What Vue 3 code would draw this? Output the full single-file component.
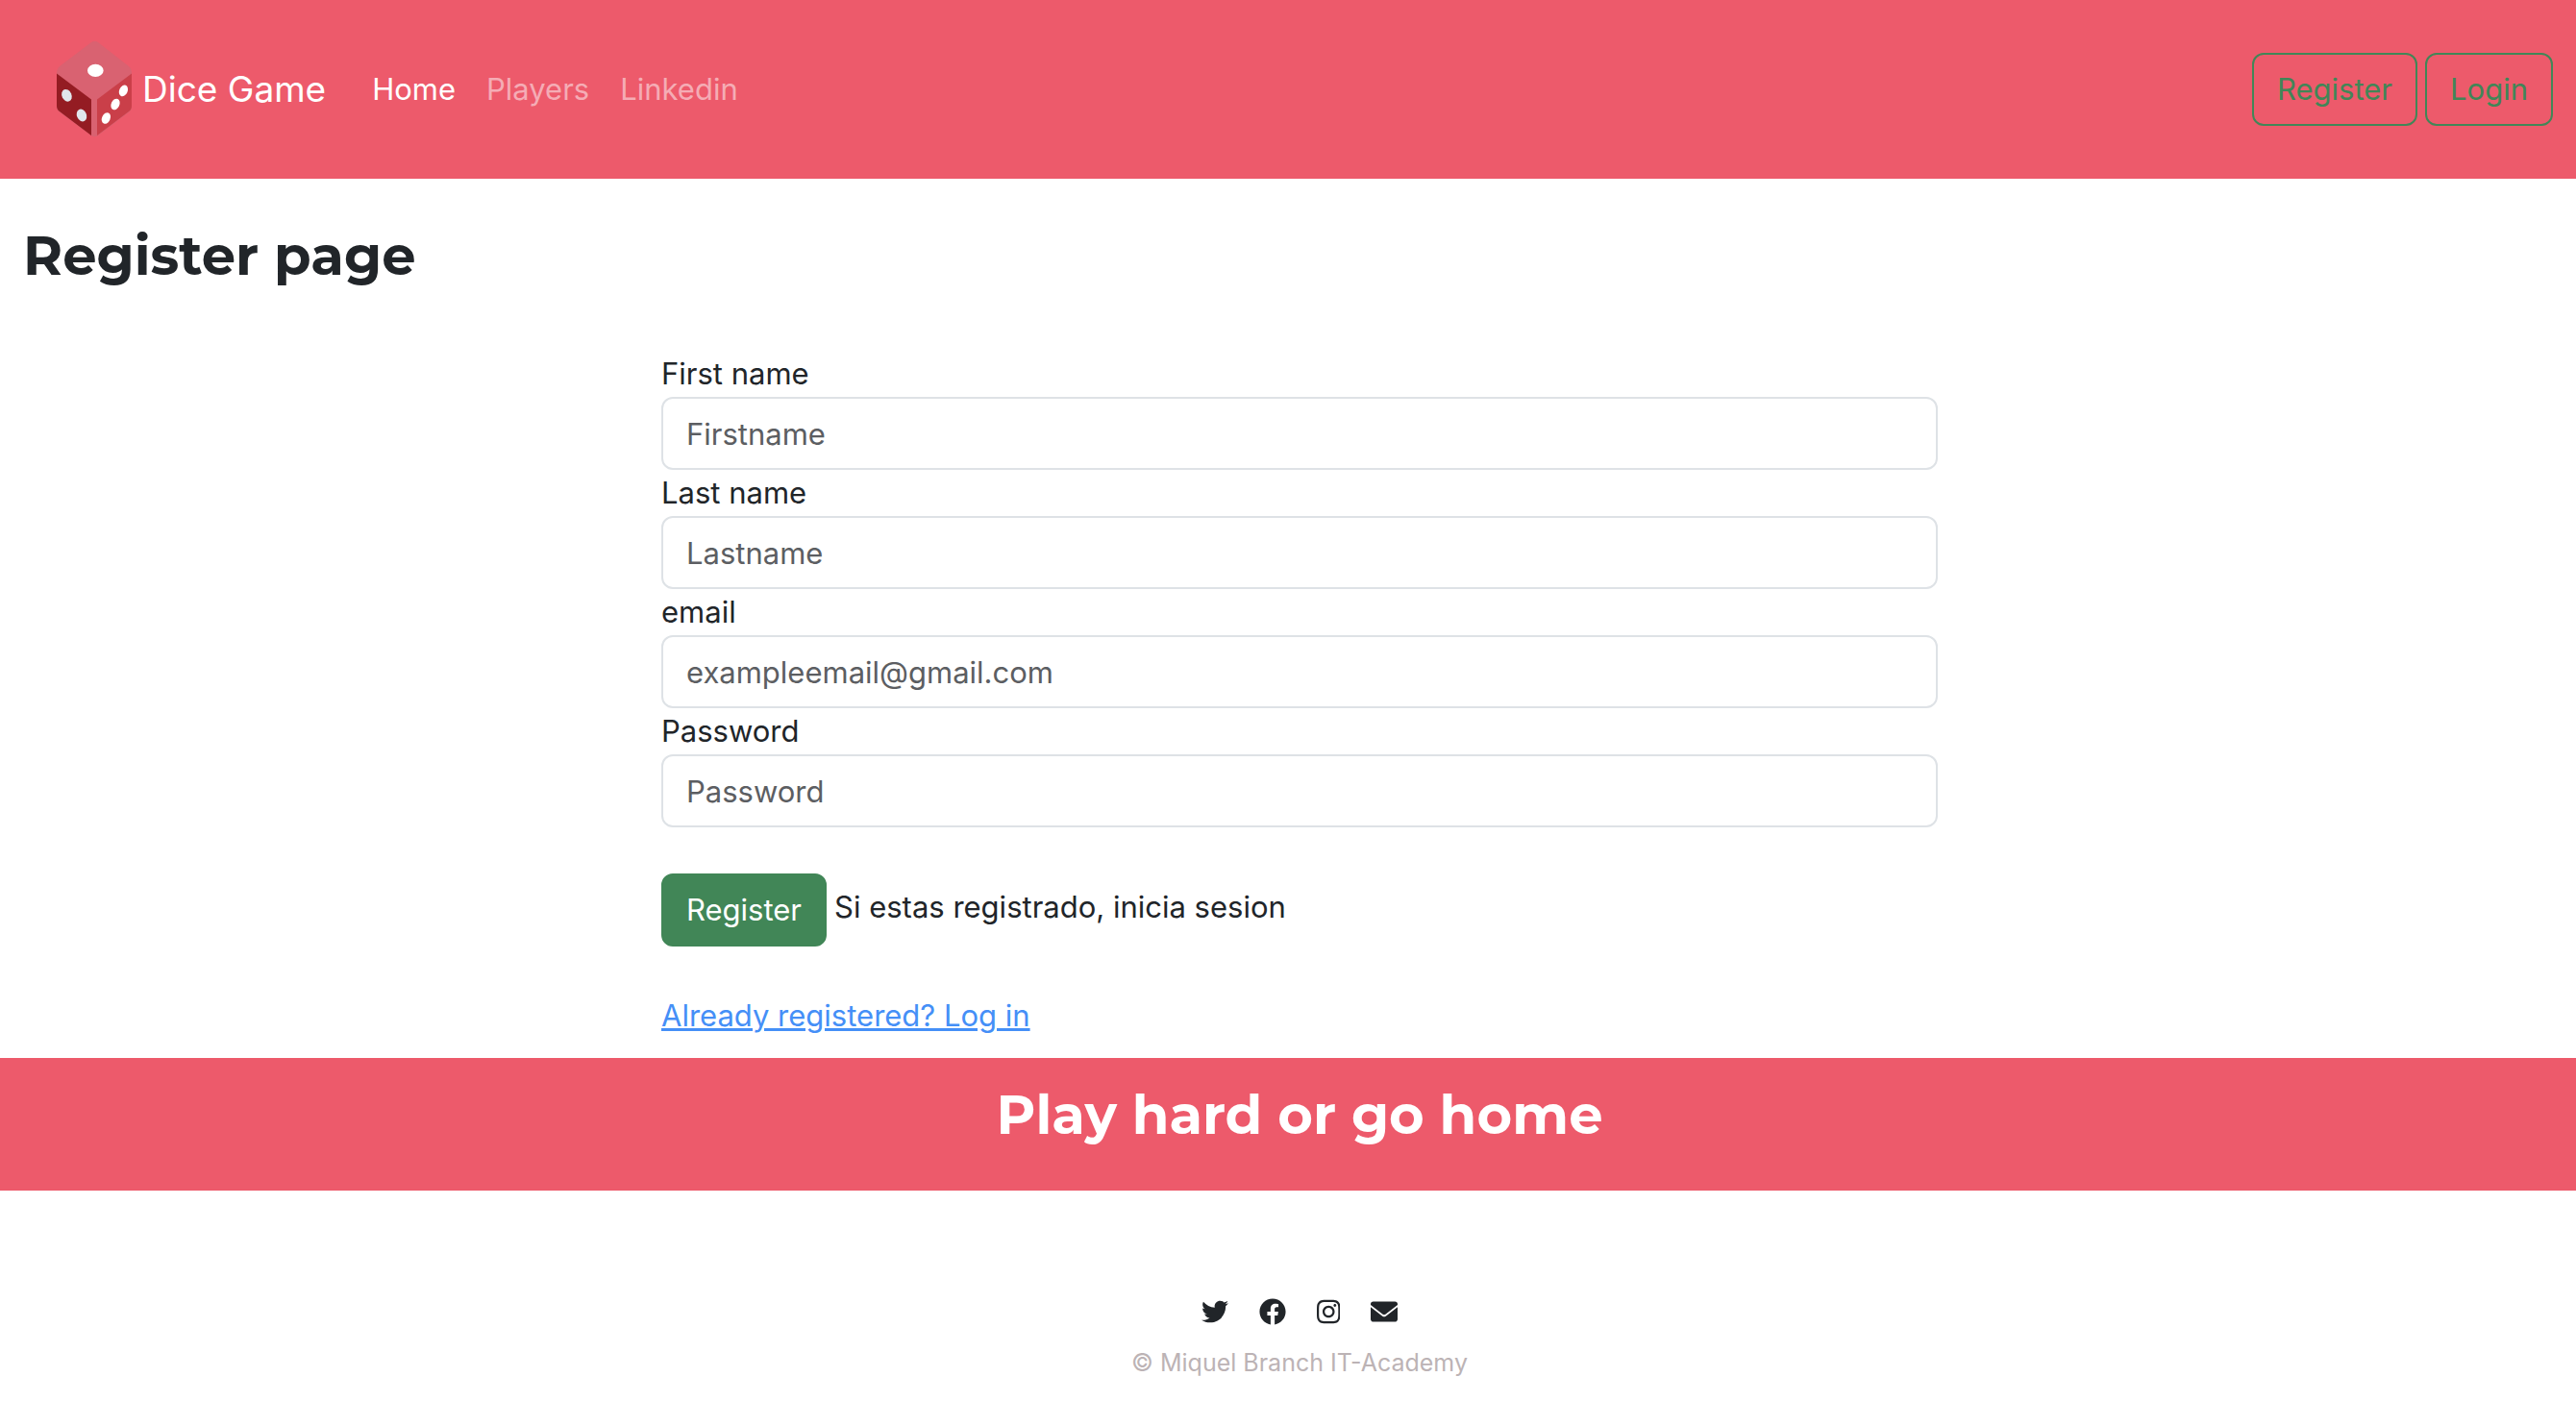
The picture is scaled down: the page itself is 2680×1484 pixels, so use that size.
<script setup>
import { reactive } from 'vue'

const links = [
  { label: 'Home', active: true },
  { label: 'Players', active: false },
  { label: 'Linkedin', active: false },
]

const fields = [
  { id: 'firstname', label: 'First name', type: 'text', placeholder: 'Firstname' },
  { id: 'lastname', label: 'Last name', type: 'text', placeholder: 'Lastname' },
  { id: 'email', label: 'email', type: 'email', placeholder: 'exampleemail@gmail.com' },
  { id: 'password', label: 'Password', type: 'password', placeholder: 'Password' },
]

const form = reactive({ firstname: '', lastname: '', email: '', password: '' })

const socials = [
  {
    name: 'Twitter',
    box: '0 0 512 512',
    path: 'M459.37 151.716c.325 4.548.325 9.097.325 13.645 0 138.72-105.583 298.558-298.558 298.558-59.452 0-114.68-17.219-161.137-47.106 8.447.974 16.568 1.299 25.34 1.299 49.055 0 94.213-16.568 130.274-44.832-46.132-.975-84.792-31.188-98.112-72.772 6.498.974 12.995 1.624 19.818 1.624 9.421 0 18.843-1.3 27.614-3.573-48.081-9.747-84.143-51.98-84.143-102.985v-1.299c13.969 7.797 30.214 12.67 47.431 13.319-28.264-18.843-46.781-51.005-46.781-87.391 0-19.492 5.197-37.36 14.294-52.954 51.655 63.675 129.3 105.258 216.365 109.807-1.624-7.797-2.599-15.918-2.599-24.04 0-57.828 46.782-104.934 104.934-104.934 30.213 0 57.502 12.67 76.67 33.137 23.715-4.548 46.456-13.32 66.599-25.34-7.798 24.366-24.366 44.833-46.132 57.827 21.117-2.273 41.584-8.122 60.426-16.243-14.292 20.791-32.161 39.308-52.628 54.253z',
  },
  {
    name: 'Facebook',
    box: '0 0 512 512',
    path: 'M504 256C504 119 393 8 256 8S8 119 8 256c0 123.78 90.69 226.38 209.25 245V327.69h-63V256h63v-54.64c0-62.15 37-96.48 93.67-96.48 27.14 0 55.52 4.84 55.52 4.84v61h-31.28c-30.8 0-40.41 19.12-40.41 38.73V256h68.78l-11 71.69h-57.78V501C413.31 482.38 504 379.78 504 256z',
  },
  {
    name: 'Instagram',
    box: '0 0 448 512',
    path: 'M224.1 141c-63.6 0-114.9 51.3-114.9 114.9s51.3 114.9 114.9 114.9S339 319.5 339 255.9 287.7 141 224.1 141zm0 189.6c-41.1 0-74.7-33.5-74.7-74.7s33.5-74.7 74.7-74.7 74.7 33.5 74.7 74.7-33.6 74.7-74.7 74.7zm146.4-194.3c0 14.9-12 26.8-26.8 26.8-14.9 0-26.8-12-26.8-26.8s12-26.8 26.8-26.8 26.8 12 26.8 26.8zm76.1 27.2c-1.7-35.9-9.9-67.7-36.2-93.9-26.2-26.2-58-34.4-93.9-36.2-37-2.1-147.9-2.1-184.9 0-35.8 1.7-67.6 9.9-93.9 36.1s-34.4 58-36.2 93.9c-2.1 37-2.1 147.9 0 184.9 1.7 35.9 9.9 67.7 36.2 93.9s58 34.4 93.9 36.2c37 2.1 147.9 2.1 184.9 0 35.9-1.7 67.7-9.9 93.9-36.2 26.2-26.2 34.4-58 36.2-93.9 2.1-37 2.1-147.8 0-184.8zM398.8 388c-7.8 19.6-22.9 34.7-42.6 42.6-29.5 11.7-99.5 9-132.1 9s-102.7 2.6-132.1-9c-19.6-7.8-34.7-22.9-42.6-42.6-11.7-29.5-9-99.5-9-132.1s-2.6-102.7 9-132.1c7.8-19.6 22.9-34.7 42.6-42.6 29.5-11.7 99.5-9 132.1-9s102.7-2.6 132.1 9c19.6 7.8 34.7 22.9 42.6 42.6 11.7 29.5 9 99.5 9 132.1s2.7 102.7-9 132.1z',
  },
  {
    name: 'Email',
    box: '0 0 512 512',
    path: 'M50 64C20 64 0 84 0 110v20L230 308Q256 326 282 308L512 130v-20c0-26-20-46-50-46zM0 170v226c0 30 22 52 52 52h408c30 0 52-22 52-52V170L288 342Q256 364 224 342z',
  },
]
</script>

<template>
  <div class="page">
    <header class="navbar">
      <a class="brand" href="#">
        <svg class="dice" viewBox="0 0 100 100" aria-hidden="true">
          <path fill="#d96271" d="M47 1Q50.500-1.500 54 1L86 26Q89 28.500 89 33V69Q89 71 87 73L54 98Q50.500 100.500 47 98L13 73Q11 71 11 69V33Q11 28.500 14 26Z" />
          <path fill="#941c23" d="M11 33.500 47 60.500V98L14 73Q11 71 11 67Z" />
          <path fill="#ca3f49" d="M89 33.500 53 60.500V98L86 73Q89 71 89 67Z" />
          <ellipse cx="51.300" cy="30.400" rx="8.300" ry="6.600" fill="#fff" />
          <g fill="#e1e6ec">
            <ellipse cx="21.400" cy="56.300" rx="5" ry="6.600" transform="rotate(-24 21.400 56.300)" />
            <ellipse cx="37" cy="77" rx="5" ry="6.600" transform="rotate(-24 37 77)" />
          </g>
          <g fill="#fff">
            <ellipse cx="80.400" cy="51.400" rx="4.300" ry="6.100" transform="rotate(24 80.400 51.400)" />
            <ellipse cx="72" cy="65.500" rx="4.300" ry="6.100" transform="rotate(24 72 65.500)" />
            <ellipse cx="62.400" cy="80" rx="4.300" ry="6.100" transform="rotate(24 62.400 80)" />
          </g>
        </svg>
        <span>Dice Game</span>
      </a>
      <nav class="links">
        <a v-for="link in links" :key="link.label" href="#" :class="{ active: link.active }">{{ link.label }}</a>
      </nav>
      <div class="actions">
        <button type="button" class="btn btn-outline">Register</button>
        <button type="button" class="btn btn-outline">Login</button>
      </div>
    </header>

    <main class="content">
      <h1 class="title">Register page</h1>
      <form class="form" @submit.prevent>
        <template v-for="field in fields" :key="field.id">
          <label :for="field.id">{{ field.label }}</label>
          <input :id="field.id" v-model="form[field.id]" :type="field.type" :placeholder="field.placeholder" />
        </template>
        <div class="submit-row">
          <button type="submit" class="btn btn-solid">Register</button>
          <p>Si estas registrado, inicia sesion</p>
        </div>
        <a class="login-link" href="#">Already registered? Log in</a>
      </form>
    </main>

    <section class="banner">
      <h2 class="title">Play hard or go home</h2>
    </section>

    <footer class="footer">
      <div class="socials">
        <a v-for="icon in socials" :key="icon.name" href="#" :aria-label="icon.name">
          <svg :viewBox="icon.box" height="28"><path :d="icon.path" /></svg>
        </a>
      </div>
      <p>© Miquel Branch IT-Academy</p>
    </footer>
  </div>
</template>

<style>
body {
  background: #fff;
}
</style>

<style scoped>
.page {
  font-family: "Inter", sans-serif;
  font-size: 31px;
  line-height: 48px;
  color: #212529;
}

.page *,
.page *::before {
  box-sizing: border-box;
}

h1,
h2,
p {
  margin: 0;
}

.navbar {
  display: flex;
  align-items: center;
  padding: 43px 24px;
  background: #ed5a6b;
}

.brand {
  display: flex;
  align-items: center;
  padding: 0 32px 0 24px;
  font-size: 37px;
  color: #fff;
  text-decoration: none;
}

.dice {
  width: 100px;
  height: 100px;
}

.links {
  display: flex;
}

.links a {
  padding: 0 16px;
  color: #f5acb5;
  text-decoration: none;
}

.links a.active {
  color: #fff;
}

.actions {
  display: flex;
  gap: 8px;
  margin-left: auto;
}

.btn {
  padding: 12px 24px;
  border: 2px solid #418657;
  border-radius: 12px;
  font: inherit;
  cursor: pointer;
}

.btn-outline {
  background: transparent;
  color: #418657;
}

.btn-solid {
  background: #418657;
  color: #fff;
}

.title {
  font-family: "Montserrat", "Open Sans", sans-serif;
  font-size: 56px;
  font-weight: 700;
  line-height: 70px;
}

.content {
  padding: 45px 0 20px 24px;
}

.form {
  display: flex;
  flex-direction: column;
  align-items: flex-start;
  width: 50%;
  margin: 64px auto 0;
}

.form input {
  width: 100%;
  height: 76px;
  padding: 12px 24px;
  border: 2px solid #dee2e6;
  border-radius: 12px;
  background: #fff;
  color: inherit;
  font: inherit;
}

.form input::placeholder {
  color: #5c5e62;
  opacity: 1;
}

.submit-row {
  display: flex;
  gap: 8px;
  margin: 48px 0;
}

.submit-row p {
  line-height: 70px;
}

.login-link {
  color: #458ff7;
  text-decoration-thickness: 3px;
}

.banner {
  padding: 24px 0 44px 24px;
  background: #ed5a6b;
  color: #fff;
  text-align: center;
}

.footer {
  padding: 112px 0 48px 24px;
  text-align: center;
}

.socials {
  display: flex;
  justify-content: center;
  gap: 32px;
}

.socials a {
  display: flex;
}

.socials svg {
  fill: #212529;
}

.footer p {
  margin-top: 20px;
  font-size: 25px;
  line-height: 38px;
  color: #bcb3b5;
}
</style>
